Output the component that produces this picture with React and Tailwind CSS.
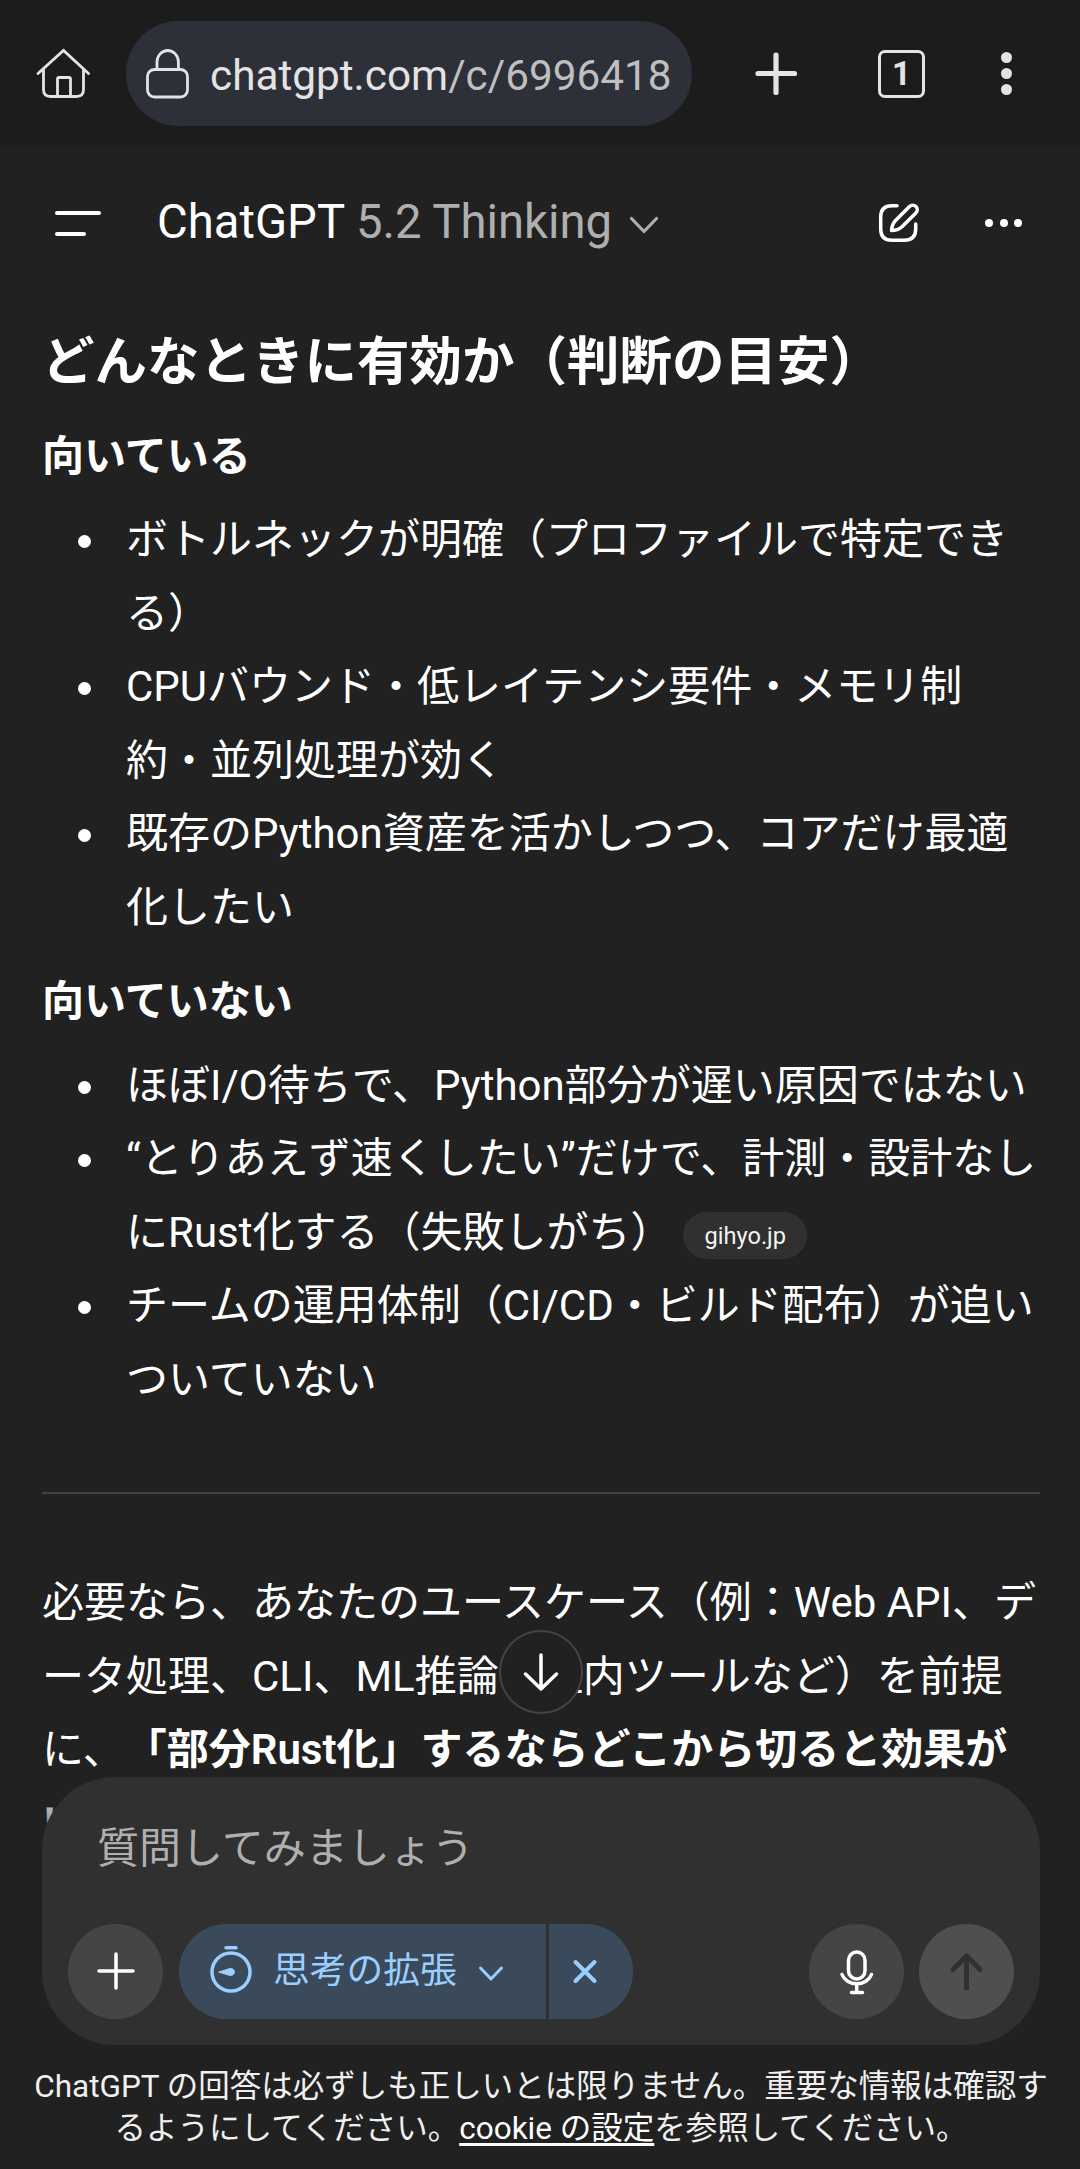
import { clsx } from "clsx";

const SUITABLE = [
  { text: "ボトルネックが明確（プロファイルで特定できる）" },
  { text: "CPUバウンド・低レイテンシ要件・メモリ制約・並列処理が効く" },
  { text: "既存のPython資産を活かしつつ、コアだけ最適化したい" },
];

const UNSUITABLE = [
  { text: "ほぼI/O待ちで、Python部分が遅い原因ではない" },
  { text: "“とりあえず速くしたい”だけで、計測・設計なしにRust化する（失敗しがち）", source: "gihyo.jp" },
  { text: "チームの運用体制（CI/CD・ビルド配布）が追いついていない" },
];

const Icon = ({ size, className, children, width = 2 }) => (
  <svg
    width={size}
    height={size}
    viewBox={`0 0 ${size} ${size}`}
    fill="none"
    stroke="currentColor"
    strokeWidth={width}
    strokeLinecap="round"
    strokeLinejoin="round"
    className={clsx("shrink-0", className)}
  >
    {children}
  </svg>
);

const BrowserBar = () => (
  <div className="flex h-[147px] shrink-0 items-center bg-[#1c1c1c] text-[#e3e3e3]">
    <Icon size={60} width={2.8} className="ml-[33px]">
      <path d="M5 29.5 30.500 6.500 55.500 29.5" strokeLinejoin="miter" />
      <path d="M10.500 26V45.500Q10.500 52.500 17.500 52.500H43.500Q50.500 52.500 50.500 45.500V26" />
      <path d="M24.500 52V35Q24.500 33.500 26 33.500H36Q37.500 33.500 37.500 35V52" />
    </Icon>
    <div className="ml-[33px] flex h-[105px] w-[566px] items-center overflow-hidden rounded-full bg-[#2d3038]">
      <Icon size={60} width={2.8} className="ml-[11px]">
        <rect x="10.500" y="25.500" width="40" height="27.500" rx="7" />
        <path d="M20 25V18a10.700 11.500 0 0 1 21.400 0V25" />
      </Icon>
      <div className="mt-[5px] ml-[13px] whitespace-nowrap text-[42.3px] leading-[60px]">
        chatgpt.com<span className="text-[#bfbfbf]">/c/6996418</span>
      </div>
    </div>
    <Icon size={60} width={5.200} className="ml-[54px]">
      <path d="M30 11V48.500M12 29.500H48.500" />
    </Icon>
    <div className="ml-[72px] flex h-[48px] w-[47px] items-center justify-center rounded-[7px] border-[3px] border-[#e3e3e3] text-[33px] leading-none font-bold">
      1
    </div>
    <div className="ml-[76px] flex flex-col gap-[5px]">
      <span className="size-[11px] rounded-full bg-[#e3e3e3]" />
      <span className="size-[11px] rounded-full bg-[#e3e3e3]" />
      <span className="size-[11px] rounded-full bg-[#e3e3e3]" />
    </div>
  </div>
);

const ChatHeader = () => (
  <div className="flex h-[152px] shrink-0 items-center text-white">
    <div className="ml-[55px] flex w-[102px] flex-col gap-[17px]">
      <span className="h-[4px] w-[46px] rounded-full bg-white" />
      <span className="h-[4px] w-[31px] rounded-full bg-white" />
    </div>
    <div className="flex w-[721px] items-center">
      <div className="-mt-[2px] whitespace-nowrap text-[47.25px] leading-[74px]">
        ChatGPT <span className="text-[#afafaf]">5.2 Thinking</span>
      </div>
      <Icon size={42} width={3.200} className="mt-1 ml-[11px] text-[#afafaf]">
        <path d="M8.500 14.500 21 27.500 33.500 14.500" />
      </Icon>
    </div>
    <Icon size={42} width={3.500}>
      <path d="M19 3.700H14Q2.700 3.700 2.700 15V27Q2.700 38.300 14 38.300H26Q37.700 38.300 37.700 27V22" />
      <path d="M13.500 28.500Q14 22 17.500 18.500L31.500 4.500A4.500 4.500 0 0 1 37.900 10.900L24 24.800Q20 28.500 13.500 28.500Z" />
    </Icon>
    <div className="ml-[65px] flex gap-[6.500px]">
      <span className="size-[8px] rounded-full bg-white" />
      <span className="size-[8px] rounded-full bg-white" />
      <span className="size-[8px] rounded-full bg-white" />
    </div>
  </div>
);

const BulletList = ({ items }) => (
  <ul className="mt-[10px]">
    {items.map(({ text, source }) => (
      <li key={text} className="flex">
        <span className="mt-[32px] mr-[35px] ml-[36px] size-[13px] shrink-0 rounded-full bg-white" />
        <div>
          {text}
          {source && (
            <span className="ml-[11px] inline-flex h-[47px] items-center rounded-full bg-[#303030] px-[21px] align-[3px] text-[23.600px] leading-[30px] text-[#f3f3f3]">
              {source}
            </span>
          )}
        </div>
      </li>
    ))}
  </ul>
);

const Answer = () => (
  <div className="ml-[42px] w-[998px] text-[42px] leading-[73.500px] text-white">
    <h2 className="pt-[27px] text-[52.500px] font-semibold">どんなときに有効か（判断の目安）</h2>
    <h3 className="mt-[20px] font-semibold">向いている</h3>
    <BulletList items={SUITABLE} />
    <h3 className="mt-[21px] font-semibold">向いていない</h3>
    <BulletList items={UNSUITABLE} />
    <hr className="mt-[76px] mb-[72px] border-t-2 border-[#424242]" />
    <p>
      必要なら、あなたのユースケース（例：Web API、データ処理、CLI、ML推論、社内ツールなど）を前提に、
      <strong className="font-semibold">「部分Rust化」するならどこから切ると効果がいちばん大きいか</strong>
      を Rust 側の設計案も含めて、まず具体的に整理できます。
    </p>
  </div>
);

const Composer = () => (
  <div className="ml-[42px] flex h-[268px] w-[998px] flex-col rounded-[73px] bg-[#303030]">
    <div className="mt-[35px] ml-[55px] text-[42px] leading-[74px] text-[#afafaf]">質問してみましょう</div>
    <div className="mt-[38px] flex items-center pr-[26px] pl-[26px]">
      <button className="flex size-[95px] items-center justify-center rounded-full bg-[#454545] text-white">
        <Icon size={52} width={3.500}>
          <path d="M26 8V42M9 25H43" />
        </Icon>
      </button>
      <div className="ml-[16px] flex h-[95px] gap-[3px] text-[#99ceff]">
        <button className="flex w-[367px] items-center rounded-l-full bg-[#3a4a5a]">
          <Icon size={52} width={3.500} className="ml-[26px]">
            <circle cx="26" cy="26" r="19" />
            <path d="M21 1.800H31" />
            <path d="M14 26 25 22.500A3.600 3.600 0 1 1 25 29.500Z" fill="currentColor" strokeWidth="1" />
          </Icon>
          <span className="-mt-[2px] ml-[16px] text-[36.750px] leading-[52px]">思考の拡張</span>
          <Icon size={42} width={3} className="mt-1 ml-[13px]">
            <path d="M10.500 15 21 26 31.500 15" />
          </Icon>
        </button>
        <button className="flex w-[84px] items-center rounded-r-full bg-[#3a4a5a]">
          <Icon size={42} width={4} className="ml-[15px]">
            <path d="M11.500 11 30.500 30M30.500 11 11.500 30" />
          </Icon>
        </button>
      </div>
      <button className="ml-auto flex size-[95px] items-center justify-center rounded-full bg-[#454545] text-white">
        <Icon size={52} width={3.500}>
          <rect x="17.500" y="6" width="16.500" height="27" rx="8.200" />
          <path d="M11 28.500A15.500 13.500 0 0 0 40.500 28.500" />
          <path d="M25.700 38.500V46.500M20.500 46.500H31.500" />
        </Icon>
      </button>
      <button className="ml-[15px] flex size-[95px] items-center justify-center rounded-full bg-[#4f4f4f] text-[#303030]">
        <Icon size={52} width={5}>
          <path d="M25.500 42V10.500M12 23.500 25.500 10 39 23.500" />
        </Icon>
      </button>
    </div>
  </div>
);

export default function App() {
  return (
    <div className="relative flex h-[2169px] w-[1080px] flex-col overflow-hidden bg-[#212121] font-[Roboto,'Noto_Sans_CJK_JP',sans-serif] [text-spacing-trim:space-all]" lang="ja">
      <BrowserBar />
      <ChatHeader />
      <main className="min-h-0 flex-1 overflow-hidden">
        <Answer />
      </main>

      {/* Composer floats over the conversation */}
      <div className="absolute inset-x-0 bottom-0 flex h-[392px] flex-col bg-[linear-gradient(to_bottom,transparent,#212121_95px)]">
        <Composer />
        <p className="mt-[21px] ml-[2px] text-center text-[31.500px] leading-[42px] text-[#f0f0f0]">
          ChatGPT の回答は必ずしも正しいとは限りません。重要な情報は確認す
          <br />
          るようにしてください。
          <span className="text-white underline decoration-[3px] underline-offset-[4px]">cookie の設定</span>
          を参照してください。
        </p>
      </div>
      <button className="absolute top-[1630px] left-[499px] flex size-[84px] items-center justify-center rounded-full border-2 border-[#444444] bg-[#212121] text-white">
        <Icon size={52} width={3.500}>
          <path d="M26 9V43M10.500 28 26 43 41.500 28" />
        </Icon>
      </button>
    </div>
  );
}
